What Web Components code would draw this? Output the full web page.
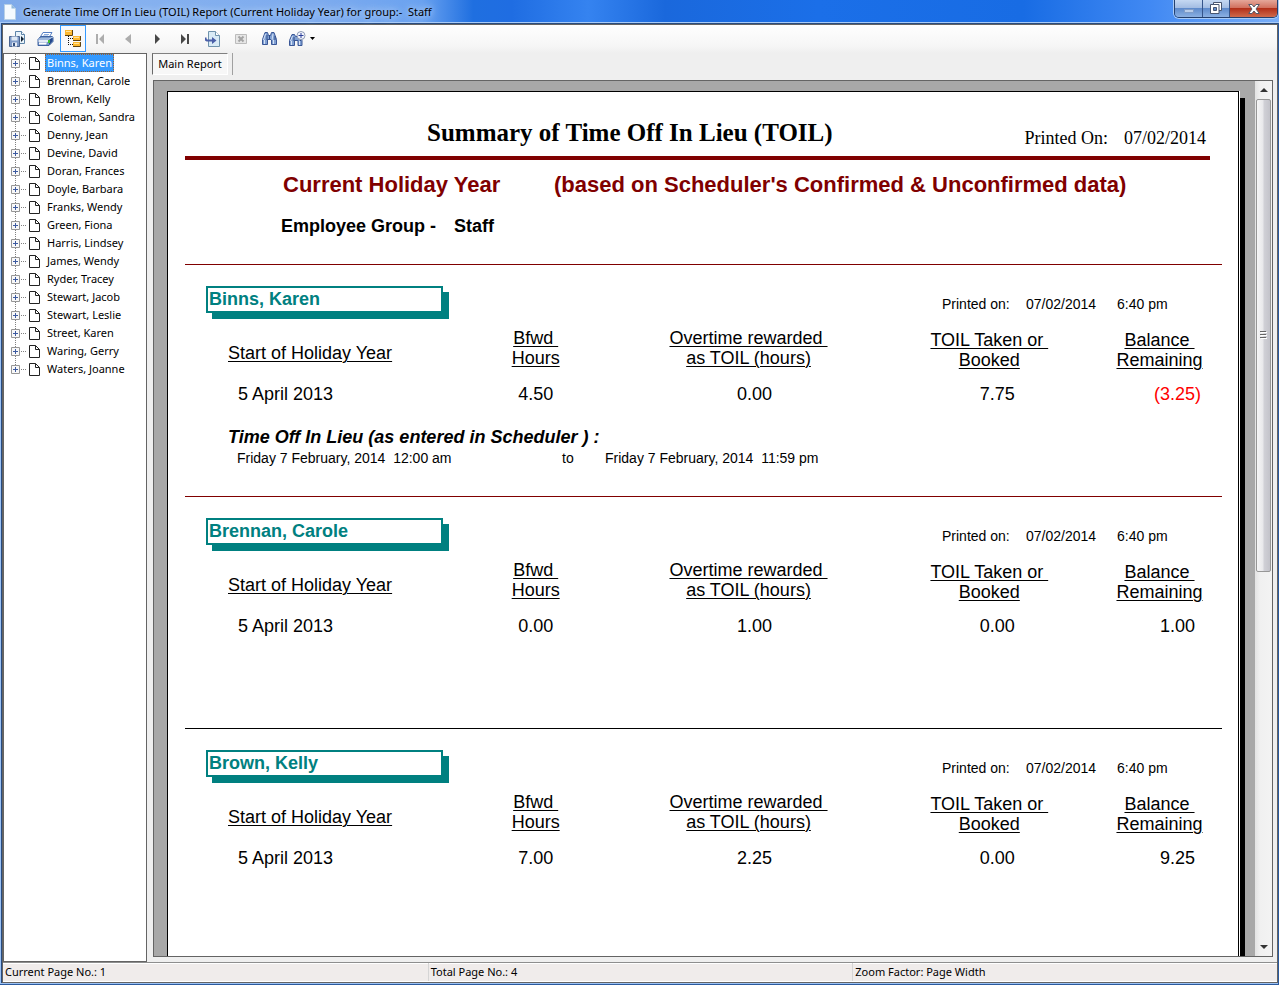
<!DOCTYPE html>
<html lang="en">
<head>
<meta charset="utf-8">
<title>Generate Time Off In Lieu (TOIL) Report</title>
<style>
  html, body { margin: 0; height: 100%; }
  body { font: 11px/18px "Noto Sans", "Open Sans", sans-serif; color: #000; overflow: hidden; }
</style>
</head>
<body>
<report-window></report-window>

<script>
const define = (name, html, init) => {
  const template = document.createElement('template');
  template.innerHTML = html;
  customElements.define(name, class extends HTMLElement {
    constructor() {
      super();
      this.attachShadow({ mode: 'open' }).append(template.content.cloneNode(true));
    }
    connectedCallback() { if (init) init(this, this.shadowRoot); }
  });
};

/* ---------- title bar ---------- */
define('title-bar', `
<style>
  :host { display: flex; height: 22px; border-bottom: 1px solid #a9cbf7; position: relative;
    background: linear-gradient(90deg, #7eaaea 0, #86b1ef 10%, #7dabee 25%, #6aa2f0 33%, #1f6fe0 37%, #1f6de2 40%, #3583f0 46%, #1a68dc 52%, #1b6fe8 64%, #186ce4 80%, #4189f3 90%, #79aef8 100%); }
  .icon { margin: 4px 0 0 4px; flex: none; }
  h1 { margin: 3px 0 0 7px; font: inherit; white-space: pre; flex: 1;
    text-shadow: 0 0 6px #b8d4fa, 0 0 8px #b8d4fa; }
  .buttons { display: flex; height: 17px; margin-right: 1px; border: 1px solid #24406e; border-top: 0;
    border-radius: 0 0 5px 5px; overflow: hidden; box-shadow: 0 0 0 1px #a9cbf7; }
  button { border: 0; padding: 0; width: 27px; display: grid; place-items: center;
    background: linear-gradient(#c5d8f2 0, #a3bde3 45%, #5f8bcb 50%, #8bb0e2 100%); }
  button + button { border-left: 1px solid #35558b; }
  .close { width: 48px; background: linear-gradient(#e5a79a 0, #d2715f 45%, #b3301a 50%, #cf6a4c 100%); }
</style>
<svg class="icon" width="12" height="16" viewBox="0 0 12 16"><path d="M.5.5h7l4 4v11H.5z" fill="#f4faff" stroke="#b7d0e6"/><path d="M7.500.5v4h4z" fill="#8fb8dc"/></svg>
<h1><slot></slot></h1>
<div class="buttons">
  <button aria-label="Minimise"><svg width="12" height="12"><path d="M1.500 6.500h9v3h-9z" fill="#b9cdea" stroke="#7f9cc8"/></svg></button>
  <button aria-label="Restore"><svg width="12" height="13"><path d="M3.500 .5h8v8h-8z" fill="#fff" stroke="#475570"/><path d="M.5 2.500h8.500v9H.5z" fill="#fff" stroke="#475570"/><path d="M3.500 5.500h3v3h-3z" fill="#5f8bcb" stroke="#475570"/></svg></button>
  <button class="close" aria-label="Close"><svg width="12" height="12"><path d="M.7 1.500H4L6 4l2-2.500h3.300L8 6l3.300 4.500H8L6 8l-2 2.500H.7L4 6z" fill="#fff" stroke="#555b6b"/></svg></button>
</div>`);

/* ---------- toolbar ---------- */
define('tool-bar', `
<style>
  :host { display: flex; height: 28px; box-sizing: border-box;
    background: linear-gradient(#fefefe, #f6f6f6 75%, #efefef); }
  button { width: 26px; height: 27px; margin: 0 1px; padding: 0; border: 0; background: none;
    display: grid; place-items: center; }
  .on { border: 1px solid #3399ff; background: #f8f9fb; }
  .wide { width: 38px; grid-auto-flow: column; justify-content: start; padding-left: 5px; gap: 4px; }
</style>
<button aria-label="Export report"><svg width="16" height="16">
  <path d="M6.500.5h6l3 3v9h-9z" fill="#e9f3fa" stroke="#5d84a8"/><path d="M12.500.5v3h3" fill="#fff" stroke="#5d84a8"/>
  <path d="M12 5l3 3-3 3z" fill="#123"/>
  <path d="M.5 5.500h10v10H.5z" fill="#7f9bc8" stroke="#4a648f"/><path d="M2.500 5.500h6v4h-6z" fill="#dfe9f5"/><path d="M3 11.500h5v4H3z" fill="#e8edf5"/><path d="M4 12h2v3H4z" fill="#34507f"/></svg></button>
<button aria-label="Print report"><svg width="17" height="16">
  <path d="M6 1.500h9l-3 5H3z" fill="#fff" stroke="#5680c4"/><path d="M7 3.500h5M6 5h5" stroke="#8badde"/>
  <path d="M1 8l3-2.500h11.500l.5 1v4l-4 4H1z" fill="#7899c8" stroke="#3e62a0"/><path d="M1 8h11l4-2" fill="none" stroke="#c4d6ef"/>
  <path d="M1.500 9h9.500v2H1.500z" fill="#e3ebf7"/><path d="M2 11.500h8l-1 2H2z" fill="#fff"/><path d="M12 9l3.500-2.500v3.500L12 14z" fill="#23468c"/><path d="M11 9h2v3h-2z" fill="#3fc02f"/></svg></button>
<button class="on" aria-label="Toggle group tree" aria-pressed="true"><svg width="16" height="17">
  <path d="M3.500 6v9M5 8.500h3M5 14.500h3" fill="none" stroke="#111" stroke-dasharray="1 1"/>
  <g fill="#fcb82e"><path d="M0 0h7v5H0zM8 6h7v4H8zM8 12h7v4H8z"/></g>
  <path d="M1 1.500h5M9 7.500h5M9 13.500h5" stroke="#ffe29a"/><path d="M0 5.500h7.500V0M8 10.500h7.500V6M8 16.500h7.500V12" fill="none" stroke="#5e430f"/></svg></button>
<button aria-label="First page"><svg width="10" height="10"><path d="M0 0h2v10H0zM8 0v10L3 5z" fill="#adadad"/></svg></button>
<button aria-label="Previous page"><svg width="8" height="10"><path d="M6 0v10L0 5z" fill="#adadad"/></svg></button>
<button aria-label="Next page"><svg width="7" height="10"><path d="M1 0v10l5-5z" fill="#484848"/></svg></button>
<button aria-label="Last page"><svg width="8" height="10"><path d="M0 0v10l5-5zM6 0h2v10H6z" fill="#484848"/></svg></button>
<button aria-label="Go to page"><svg width="16" height="16">
  <path d="M3.500.5h7l4 4v11h-11z" fill="#d9ebf6" stroke="#6f93ad"/><path d="M10.500.5v4h4" fill="#fff" stroke="#6f93ad"/>
  <path d="M.5 6.500c0 3 1 3 3 3h4" fill="none" stroke="#4a5fa8" stroke-width="2"/><path d="M7 6l4.500 3.500L7 13z" fill="#4a5fa8"/></svg></button>
<button aria-label="Close view"><svg width="12" height="12"><path d="M.5 1.500h11v9H.5z" fill="#e6e6e6" stroke="#bcbcbc"/><path d="M3.500 3.500l5 5m0-5l-5 5" stroke="#a3a3a3" stroke-width="2"/></svg></button>
<button aria-label="Find text"><svg width="15" height="15">
  <path d="M3 1.500h2.500l1 3h2l1-3H12l2.500 7v5h-5v-5h-4v5h-5v-5z" fill="#7f9fd2" stroke="#3a5796"/><path d="M3.500 3l-2 6M11 3l-1 6M2.500 9v4M11.500 9v4" stroke="#d5e2f5"/><path d="M5 4v5M13 5v4M7.500 4v4" stroke="#2e4a86"/></svg></button>
<button class="wide" aria-label="Zoom"><svg width="17" height="16">
  <path d="M3 3.500h2.500l1 2h2l1-2h2l1.500 6v5H9v-5H5.500v5h-5v-5z" fill="#7f9fd2" stroke="#3a5796"/><path d="M3.500 5l-2 5M2.500 10v4M10.500 10v4" stroke="#d5e2f5"/><path d="M5 6v4M11.500 9v1" stroke="#2e4a86"/>
  <circle cx="12" cy="4.500" r="4" fill="#f3f6fc" stroke="#8e9ab5"/><path d="M12 2v5M9.500 4.500h5" stroke="#2c3f9a"/></svg><svg width="5" height="3"><path d="M0 0h5L2.500 3z"/></svg></button>`);

/* ---------- group tree ---------- */
define('tree-item', `
<style>
  :host { display: flex; align-items: center; height: 18px; padding-left: 7px;
    background: repeating-linear-gradient(#808080 0 1px, transparent 1px 2px) 11px 0 / 1px 100% no-repeat; }
  :host(:last-child) { background-size: 1px 50%; }
  button { border: 0; padding: 0; background: none; font: inherit; color: inherit; }
  .toggle { width: 9px; height: 9px; display: flex; }
  .dots { width: 6px; height: 1px; margin: 0 2px 0 1px; background: repeating-linear-gradient(90deg, #808080 0 1px, transparent 1px 2px); }
  .doc { flex: none; }
  .label { line-height: 16px; height: 18px; box-sizing: border-box; padding: 0 1px; margin-left: 5px; border: 1px solid transparent; white-space: nowrap; }
  :host([selected]) .label { background: #3399ff; color: #fff; border: 1px dotted #a0602a; }
</style>
<button class="toggle" aria-label="Expand"><svg width="9" height="9"><path d="M.5.5h8v8h-8z" fill="#f8f8f8" stroke="#969696"/><path d="M2 4.500h5M4.500 2v5" stroke="#3c5aa0"/></svg></button>
<span class="dots"></span>
<svg class="doc" width="11" height="13"><path d="M.5.5h6l4 4v8H.5z" fill="#fff" stroke="#222"/><path d="M6.500.5v4h4" fill="none" stroke="#222"/></svg>
<button class="label"><slot></slot></button>`);

define('group-tree', `
<style>
  :host { display: block; width: 142px; flex: none; background: #fff; border: 1px solid #646464; overflow: hidden; }
</style>
<div id="list"></div>`, (host, root) => {
  const names = ['Binns, Karen', 'Brennan, Carole', 'Brown, Kelly', 'Coleman, Sandra', 'Denny, Jean', 'Devine, David',
    'Doran, Frances', 'Doyle, Barbara', 'Franks, Wendy', 'Green, Fiona', 'Harris, Lindsey', 'James, Wendy',
    'Ryder, Tracey', 'Stewart, Jacob', 'Stewart, Leslie', 'Street, Karen', 'Waring, Gerry', 'Waters, Joanne'];
  names.forEach((name, i) => {
    const item = document.createElement('tree-item');
    item.textContent = name;
    if (i === 0) item.setAttribute('selected', '');
    root.getElementById('list').append(item);
  });
});

/* ---------- one employee's section ---------- */
define('toil-record', `
<style>
  :host { display: block; box-sizing: border-box; min-height: 232px; padding: 21px 0 0 21px;
    border-top: 1px solid #800000; font-size: 18px; line-height: 20px; }
  :host([rule="black"]) { border-top-color: #000; }
  header { display: flex; justify-content: space-between; }
  h3 { box-sizing: border-box; width: 237px; height: 27px; margin: 0; padding: 1px; border: 2px solid #008080;
    box-shadow: 6px 6px 0 #008080; font-size: 18px; line-height: 20px; color: #008080; }
  .printed { display: grid; grid-template-columns: 84px 91px 105px; font-size: 14px; padding-top: 8px; }
  table { width: 100%; margin-top: 14px; table-layout: fixed; border-collapse: collapse; }
  th, td { padding: 0; text-align: center; font-weight: normal; }
  th { height: 42px; vertical-align: top; text-decoration: underline; text-decoration-thickness: 1px; text-underline-offset: 2px; white-space: pre; }
  th:nth-child(1) { text-align: left; vertical-align: middle; padding: 8px 0 0 22px; height: 34px; }
  th:nth-child(n+4) { vertical-align: bottom; }
  td { padding-top: 14px; }
  td:nth-child(1) { text-align: left; padding-left: 32px; }
  td:nth-child(3) { padding-left: 12px; }
  td:nth-child(4) { padding-left: 16px; }
  td:nth-child(5) { text-align: right; padding-right: 27px; }
  td.negative:nth-child(5) { color: #f00; padding-right: 21px; }
</style>
<header><h3 id="name"></h3>
  <div class="printed"><span>Printed on:</span><span>07/02/2014</span><span>6:40 pm</span></div></header>
<table>
  <colgroup><col style="width:24.600%"><col style="width:15.700%"><col style="width:26.200%"><col style="width:21.200%"><col></colgroup>
  <thead><tr><th>Start of Holiday Year</th><th>Bfwd 
Hours</th><th>Overtime rewarded 
as TOIL (hours)</th><th>TOIL Taken or 
Booked</th><th>Balance 
Remaining</th></tr></thead>
  <tbody><tr id="row"></tr></tbody>
</table>
<slot></slot>`, (host, root) => {
  root.getElementById('name').textContent = host.getAttribute('name');
  host.getAttribute('values').split('|').forEach(v => {
    const td = document.createElement('td');
    td.textContent = v;
    if (v[0] === '(') td.className = 'negative';
    root.getElementById('row').append(td);
  });
});

define('toil-entries', `
<style>
  :host { display: block; padding: 23px 0 0 22px; }
  h4 { margin: 0; font-size: 18px; line-height: 20px; font-style: italic; white-space: nowrap; }
  .range { display: grid; grid-template-columns: 325px 43px auto; padding-left: 9px; font-size: 14px; line-height: 22px; white-space: pre; }
</style>
<h4>Time Off In Lieu (as entered in Scheduler ) :</h4>
<div class="range"><span>Friday 7 February, 2014  12:00 am</span><span>to</span><span>Friday 7 February, 2014  11:59 pm</span></div>`);

/* ---------- report page ---------- */
define('report-page', `
<style>
  :host { display: block; flex: 1; min-width: 0; box-sizing: border-box; border: 1px solid #000; border-bottom: 0;
    background: #fff; padding: 26px 16px 0 17px; box-shadow: 1px 0 0 #fff, 6px 7px 0 #000;
    font: 18px/20px "Liberation Sans", Arial, sans-serif; }
  header { display: flex; align-items: flex-end; margin-right: 12px; padding: 0 4px 8px 242px; border-bottom: 4px solid #800000;
    font-family: "Liberation Serif", "Times New Roman", serif; }
  h1 { margin: 0 auto 1px 0; font-size: 25px; line-height: 29px; white-space: nowrap; }
  .date { margin-left: 16px; }
  h2 { display: grid; grid-template-columns: 271px auto; margin: 13px 0 0; padding-left: 98px; color: #800000;
    font-size: 22px; line-height: 24px; white-space: nowrap; }
  .group { display: grid; grid-template-columns: 173px auto; margin: 19px 0 28px; padding-left: 96px; font-weight: bold; }
</style>
<header><h1>Summary of Time Off In Lieu (TOIL)</h1><span>Printed On:</span><span class="date">07/02/2014</span></header>
<h2><span>Current Holiday Year</span><span>(based on Scheduler's Confirmed &amp; Unconfirmed data)</span></h2>
<div class="group"><span>Employee Group -</span><span>Staff</span></div>
<toil-record name="Binns, Karen" values="5 April 2013|4.50|0.00|7.75|(3.25)"><toil-entries></toil-entries></toil-record>
<toil-record name="Brennan, Carole" values="5 April 2013|0.00|1.00|0.00|1.00"></toil-record>
<toil-record name="Brown, Kelly" values="5 April 2013|7.00|2.25|0.00|9.25" rule="black"></toil-record>`);

/* ---------- vertical scroll bar ---------- */
define('scroll-bar', `
<style>
  :host { display: flex; flex-direction: column; width: 17px; flex: none; background: linear-gradient(90deg, #e3e3e3, #f0f0f0 30%, #f3f3f3); }
  button { height: 18px; padding: 0; border: 0; background: none; display: grid; place-items: center; }
  .thumb { height: 54%; margin: 0 1px; box-sizing: border-box; border: 1px solid #979797; border-radius: 2px;
    background: linear-gradient(90deg, #f6f6f6, #e8e8eb 45%, #d0d0d6 55%, #c3c3ca); display: grid; place-items: center; }
  .rest { flex: 1; }
</style>
<button aria-label="Scroll up"><svg width="8" height="4"><path d="M4 0l4 4H0z" fill="#333"/></svg></button>
<div class="thumb"><svg width="7" height="8"><path d="M0 .5h6M0 3.500h6M0 6.500h6" stroke="#666"/><path d="M1 1.500h6M1 4.500h6M1 7.500h6" stroke="#fff"/></svg></div>
<div class="rest"></div>
<button aria-label="Scroll down"><svg width="8" height="4"><path d="M0 0h8L4 4z" fill="#333"/></svg></button>`);

define('report-viewer', `
<style>
  :host { display: flex; flex-direction: column; flex: 1; min-width: 0; padding: 0 4px 5px 5px; }
  .tabs { display: flex; height: 27px; }
  .tab { font: inherit; color: inherit; box-sizing: border-box; height: 22px; width: 76px; padding: 0; border: 1px solid; border-color: #808080 #fff #fff #696969; background: #f7f7f7; line-height: 20px; white-space: nowrap; }
  .sep { height: 22px; width: 1px; margin-left: 4px; background: #a0a0a0; }
  .canvas { display: flex; flex: 1; min-height: 0; margin-left: 1px; border: 1px solid #646464; background: #a8a8a8; overflow: hidden; }
  .sheet { display: flex; flex: 1; min-width: 0; padding: 10px 16px 0 13px; overflow: hidden; }
</style>
<div class="tabs"><button class="tab">Main Report</button><span class="sep"></span></div>
<div class="canvas"><div class="sheet"><report-page></report-page></div><scroll-bar></scroll-bar></div>`);

define('status-bar', `
<style>
  :host { display: grid; grid-template-columns: 1fr 1fr 1fr; height: 20px; box-sizing: border-box; border-top: 1px solid #8e8e8e; border-bottom: 1px solid #fff; background: #f0eceb; }
  span { padding-left: 2px; white-space: nowrap; box-shadow: inset 0 1px #fff; }
  span + span { border-left: 1px solid #d5d5d5; }
</style>
<span>Current Page No.: 1</span><span>Total Page No.: 4</span><span>Zoom Factor: Page Width</span>`);

define('report-window', `
<style>
  :host { display: flex; flex-direction: column; height: 100vh; background: #2b5a9e; }
  .frame { display: flex; flex-direction: column; flex: 1; min-height: 0; margin: 0 1px 1px 0; border-left: 1px solid #9cc2f4; border-bottom: 1px solid #9cc2f4; background: #274b80; padding: 1px 0 0 1px; }
  .client { display: flex; flex-direction: column; flex: 1; min-height: 0; border: 1px solid #646464; background: #efefef; }
  .body { display: flex; flex: 1; min-height: 0; }
</style>
<title-bar>Generate Time Off In Lieu (TOIL) Report (Current Holiday Year) for group:-  Staff</title-bar>
<div class="frame"><div class="client">
  <tool-bar></tool-bar>
  <div class="body"><group-tree></group-tree><report-viewer></report-viewer></div>
  <status-bar></status-bar>
</div></div>`);
</script>
</body>
</html>
